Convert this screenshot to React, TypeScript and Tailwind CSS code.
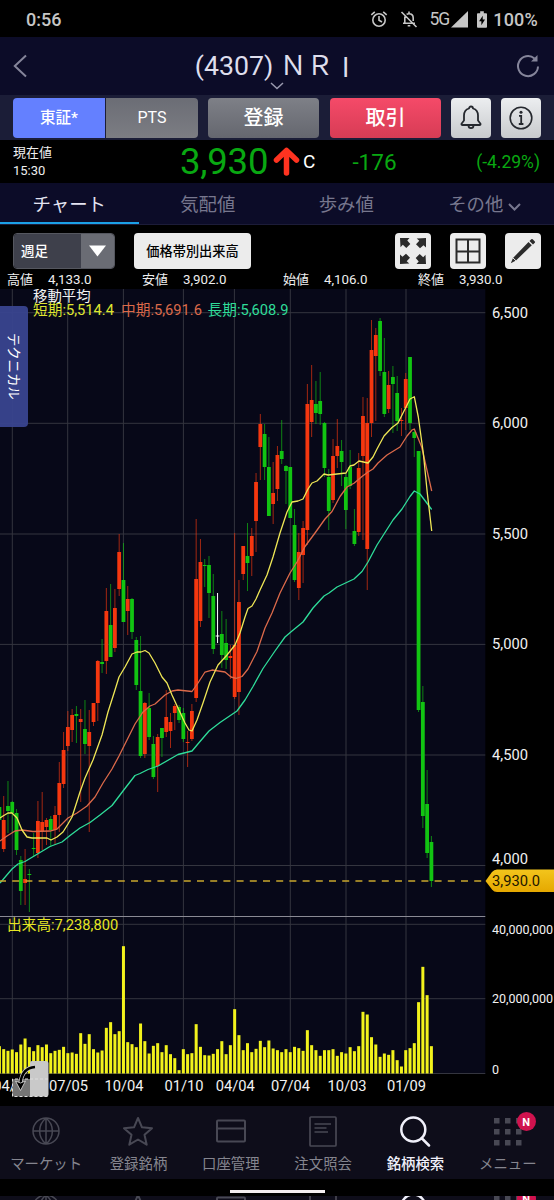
import type { ReactNode } from "react";

type Candle = [high: number, top: number, bottom: number, low: number, kind: "u" | "d" | "f"];

const STEP = 4.277;
const LAST_X = 431.4;
const BASE_Y = 1073.5;

// wick top, body top, body bottom, wick bottom
const candles: Candle[] = [
  [805, 807, 820, 822, "d"], [796, 820, 849, 852, "u"], [781, 806, 811, 833, "d"], [801, 802, 813, 833, "d"],
  [809, 813, 850, 855, "d"], [856, 860, 891, 905, "d"], [849, 879, 883, 905, "u"], [869, 874, 875, 912, "d"],
  [833, 848, 849, 857, "d"], [801, 821, 853, 858, "u"], [792, 822, 831, 850, "u"], [818, 820, 827, 845, "u"],
  [816, 819, 830, 847, "d"], [806, 815, 830, 845, "u"], [762, 783, 815, 832, "u"], [732, 750, 784, 788, "u"],
  [711, 727, 746, 751, "u"], [709, 715, 730, 742, "u"], [706, 714, 716, 743, "d"], [709, 719, 722, 802, "u"],
  [700, 729, 744, 754, "d"], [710, 732, 746, 832, "u"], [703, 703, 722, 726, "u"], [660, 661, 703, 721, "u"],
  [639, 662, 664, 673, "d"], [588, 611, 661, 674, "u"], [584, 625, 657, 657, "d"], [589, 608, 648, 652, "u"],
  [534, 552, 589, 596, "u"], [543, 580, 622, 622, "d"], [586, 599, 611, 635, "u"], [598, 599, 632, 639, "d"],
  [637, 640, 685, 690, "d"], [636, 691, 756, 758, "d"], [702, 703, 754, 758, "u"], [693, 708, 737, 740, "d"],
  [736, 744, 777, 779, "d"], [734, 737, 766, 792, "u"], [728, 728, 738, 757, "d"], [690, 717, 732, 737, "u"],
  [713, 722, 731, 748, "u"], [704, 706, 713, 730, "u"], [705, 707, 720, 723, "d"], [708, 713, 739, 742, "d"],
  [731, 742, 743, 767, "u"], [704, 711, 739, 741, "u"], [519, 579, 698, 702, "u"], [539, 562, 621, 627, "u"],
  [559, 565, 566, 587, "d"], [556, 565, 593, 618, "d"], [574, 596, 649, 654, "d"], [593, 635.5, 636.5, 643, "f"],
  [611, 634, 655, 668, "d"], [619, 643, 660, 669, "d"], [645, 656, 658, 679, "u"], [533, 645, 697, 699, "u"],
  [580, 602, 692, 715, "u"], [546, 546, 574, 580, "u"], [523, 556, 563, 591, "d"], [528, 536, 556, 576, "u"],
  [473, 482, 521, 552, "u"], [414, 424, 447, 480, "u"], [424, 434, 467, 480, "d"], [437, 467, 516, 516, "d"],
  [462, 493, 504, 524, "u"], [446, 455, 489, 501, "u"], [420, 451, 459, 464, "d"], [465, 466, 471, 504, "d"],
  [467, 467, 518, 518, "d"], [509, 525, 580, 582, "d"], [533, 552, 588, 600, "u"], [521, 528, 555, 583, "u"],
  [384, 404, 530, 545, "u"], [365, 400, 422, 437, "u"], [381, 404, 413, 424, "d"], [372, 401, 414, 425, "d"],
  [422, 423, 468, 477, "d"], [469, 477, 511, 530, "d"], [439, 456, 500, 503, "u"], [419, 446, 456, 468, "u"],
  [440, 451, 462, 486, "d"], [473, 477, 510, 529, "d"], [450, 467, 486, 489, "d"], [509, 531, 544, 546, "d"],
  [453, 468, 532, 536, "u"], [397, 416, 456, 540, "u"], [398, 423, 549, 590, "u"], [320, 350, 423, 437, "u"],
  [328, 335, 356, 421, "u"], [318, 321, 371, 376, "d"], [338, 372, 414, 417, "d"], [371, 385, 409, 413, "u"],
  [366, 377, 384, 433, "d"], [376, 393, 421, 431, "d"], [408, 420, 421, 436, "u"], [373, 379, 408, 430, "u"],
  [357, 357, 423, 430, "d"], [429, 432, 438, 457, "d"], [451, 451, 710, 712, "d"], [686, 702, 816, 828, "d"],
  [770, 804, 853, 858, "d"], [836, 842, 881, 887, "d"],
];

// bar heights in thirds of a pixel
const volumes = [
  82, 73, 68, 72, 64, 87, 105, 79, 67, 85, 79, 87, 61, 68, 71, 80, 61, 63, 59, 121, 89, 118, 73, 63, 69, 137, 154,
  118, 127, 382, 94, 88, 79, 150, 97, 60, 83, 91, 64, 85, 58, 46, 10, 73, 58, 61, 148, 80, 55, 54, 59, 73, 97, 58,
  85, 193, 115, 70, 91, 64, 74, 98, 79, 99, 75, 70, 64, 73, 64, 80, 76, 68, 130, 85, 70, 53, 70, 70, 73, 53, 64, 60,
  79, 67, 82, 185, 177, 109, 87, 50, 60, 56, 70, 40, 21, 70, 76, 91, 214, 320, 235, 82,
];

const shortMa =
  "0,818 3,816 8,813 12,813 17,818 22,830 27,837 32,838 38,838 47,838 51,840 57,837 63,832 68,824 72,817 80,792 85,778 93,760 102,735 108,712 115,690 119,677 125,667 132,654 137,652 141,652 145,650.5 149,653 155,663 162,677 167,683 172,695 178,708 185,723 189,730 192,731 197,720 203,703 210,682 218,665 227,655 235,645 240,633 245,617 248,608.5 252,606 256,599 260,590 267,575 273,557 280,533 287,512 292,502 298,501 303,499 308,489 312,483 317,481 324,474 328,475 346,473 350,466 354,465 359,461 368,463 373,457 377,449 384,436 392,427.5 398,423 405,409 410,399 414.3,396.7 418.3,417 423.3,453 427.3,493 431.7,531";
const midMa =
  "0,841 7,836 15,831 22,830 33,831.5 50,831 57,829 68,818 77,813 87,806 95,797 103,783 112,769 119,756 127,740 135,724 143,712 150,706 155,704 165,695 172,691 178,690 192,691.5 198,683 205,672 212,670 225,672 231,677 236,678.3 242,676.5 248,669 257,651.5 265,628 272,613 280,593 290,573 297,562 305,546.5 315,533 325,519 332,511.5 340,496.5 347,487 354,483.3 362,476.5 368,472 373,469 378,463 387,455 400,447 407,436 412,430 414.3,429 421.7,447 431.7,491";
const longMa =
  "0,883 12,869 18,864 25,861.5 50,846.5 62,842 70,835.5 80,828 90,822.5 100,815 112,805.5 123,791 135,775.5 140,773.5 148,769.5 158,766 178,754.5 192,751 200,741.5 209,731 220,722.5 237,711 245,700 253,686.5 263,668.5 275,651 285,637 292,631 303,622 313,608 324,596 329,593 337,587 354,579 362,571.5 368,562 377,545 393,520 402,509 410,496.5 414.3,491 420,494 431.7,509.5";

const candleColor = { u: "#f5370f", d: "#12c412", f: "#ffffff" };

const priceLabels: [string, number][] = [
  ["6,500", 312.5], ["6,000", 423], ["5,500", 533.5], ["5,000", 644], ["4,500", 754.5], ["4,000", 858.5],
];
const dateLabels: [string, number][] = [
  ["04/", 4.5], ["07/05", 68.5], ["10/04", 124], ["01/10", 184], ["04/04", 235.3], ["07/04", 290.5], ["10/03", 347], ["01/09", 406.5],
];
const verticals = [12.3, 67.7, 123.4, 183.4, 234.4, 290.3, 346, 406];
const horizontals = [312.7, 423.3, 534, 644.4, 755, 865.5, 924.3, 998.7, 1073.5];

function Chart() {
  return (
    <svg width="554" height="817" viewBox="0 289 554 817" className="block">
      <defs>
        <linearGradient id="tag" x1="0" y1="0" x2="0" y2="1">
          <stop offset="0" stopColor="#f3c51c" />
          <stop offset="1" stopColor="#e5a800" />
        </linearGradient>
      </defs>
      <rect x="0" y="289" width="485.3" height="784.5" fill="#070818" />
      <g stroke="#34353f" strokeWidth="1">
        {verticals.map((x) => <line key={x} x1={x} x2={x} y1="289" y2="1073.5" />)}
        {horizontals.map((y) => <line key={y} x1="0" x2="485.3" y1={y} y2={y} />)}
      </g>
      <line x1="0" x2="485.3" y1="916.5" y2="916.5" stroke="#8a8a94" />

      {/* Candles */}
      {candles.map(([high, top, bottom, low, kind], i) => {
        const x = LAST_X - (candles.length - 1 - i) * STEP;
        const color = candleColor[kind];
        return (
          <g key={i} fill={color}>
            <rect x={x - 0.5} y={high} width="1" height={low - high} opacity={kind === "f" ? 1 : 0.65} />
            <rect x={x - 1.9} y={top} width="3.8" height={Math.max(1, bottom - top)} />
          </g>
        );
      })}

      {/* Volume */}
      {volumes.map((v, i) => (
        <rect key={i} x={LAST_X - (volumes.length - 1 - i) * STEP - 1.5} y={BASE_Y - v / 3} width="3" height={v / 3} fill="#f2f21c" />
      ))}

      {/* Moving averages */}
      <g fill="none" strokeWidth="1.3" strokeLinejoin="round">
        <polyline points={longMa} stroke="#2fdd9a" />
        <polyline points={midMa} stroke="#dc6a4a" />
        <polyline points={shortMa} stroke="#efe756" />
      </g>

      {/* Last price */}
      <line x1="0" x2="485" y1="881" y2="881" stroke="#c9a62c" strokeWidth="1.3" strokeDasharray="7 6.2" strokeDashoffset="1" />
      <path d="M485.5 881 492 872Q494 869.500 497 869.500H554V892H497Q494 892 492 889.500Z" fill="url(#tag)" />

      <g fontFamily="Roboto, 'Noto Sans CJK JP', sans-serif" fill="#f2f2f2">
        <g fontSize="14.7">
          {priceLabels.map(([t, y]) => <text key={t} x="492" y={y + 5}>{t}</text>)}
          {dateLabels.map(([t, x]) => <text key={t} x={x} y="1091" textAnchor="middle">{t}</text>)}
          <text x="492" y="886" fill="#1c1600">3,930.0</text>
        </g>
        <g fontSize="12.500">
          <text x="492" y="934">40,000,000</text>
          <text x="492" y="1003">20,000,000</text>
          <text x="492" y="1074">0</text>
        </g>
        <g fontSize="14.700">
          <text x="33" y="301" fontSize="14.400">移動平均</text>
          <text x="33" y="314.5" fill="#dfe630">短期:5,514.4</text>
          <text x="121" y="314.5" fill="#dc6a4a">中期:5,691.6</text>
          <text x="207.500" y="314.5" fill="#2fdd9a">長期:5,608.9</text>
          <text x="7" y="929.5" fill="#e6e624">出来高:7,238,800</text>
        </g>
      </g>

      {/* Screen rotation toggle */}
      <path d="M32 1061H46Q48.500 1061 48.500 1063.500V1094Q48.500 1096.500 46 1096.500H30V1063Q30 1061 32 1061Z" fill="#c9c9c9" />
      <path d="M14 1079H30V1096.500H14Q12 1096.500 12 1094V1081Q12 1079 14 1079Z" fill="#747474" />
      <path d="M48 1079H12.500V1096.500H48" fill="none" stroke="#ddd" strokeWidth="1" strokeDasharray="3 2" />
      <path d="M35 1067Q22 1068 20.500 1083" fill="none" stroke="#ccc" strokeWidth="4" />
      <path d="M35 1067Q22 1068 20.500 1083" fill="none" stroke="#000" strokeWidth="2.500" />
      <path d="M15.500 1081 20.500 1090.500 25.500 1081 20.500 1083Z" fill="#000" stroke="#ddd" strokeWidth=".8" />
    </svg>
  );
}

function StatusBar() {
  return (
    <div className="flex h-[37px] items-center bg-black pt-px pr-[16px] pl-[26px] text-[18px] font-medium text-[#c6c6c6]">
      <span className="grow">0:56</span>
      <svg width="18" height="18" viewBox="0 0 18 18" fill="none" stroke="currentColor" strokeWidth="1.600" className="mr-[12px]">
        <circle cx="9" cy="10" r="6.200" />
        <path d="M9 6v4.300l3 1.700M1.300 4.800 4.800 1.800M16.700 4.800 13.200 1.800" />
      </svg>
      <svg width="18" height="18" viewBox="0 0 18 18" fill="none" stroke="currentColor" strokeWidth="1.600" className="mr-[11px]">
        <path d="M4.800 6.500V13M3 13.300h12M13.200 11V8c0-2.500-1.700-4.300-4.200-4.300-1 0-1.800.3-2.400.7M9 1.500v2M7.700 15.700h2.600M1.500 2 16.500 17" />
      </svg>
      <span className="text-[17.500px] font-normal tracking-[-1px]">5G</span>
      <svg width="17" height="17" viewBox="0 0 17 17" className="mr-[9px] ml-[2px]"><path d="M17 0V16.500H0Z" fill="currentColor" /></svg>
      <svg width="10" height="17" viewBox="0 0 11 18" className="mr-[6px]">
        <path d="M3.500 0h4v2H10q1 0 1 1v14q0 1-1 1H1q-1 0-1-1V3Q0 2 1 2h2.500Z" fill="currentColor" />
        <path d="M6.300 4.800 2.300 11h2.500v4.200L8.800 9H6.300Z" fill="#000" />
      </svg>
      <span className="tracking-[0.200px]">100%</span>
    </div>
  );
}

function Header() {
  return (
    <div className="relative flex h-[58px] items-center justify-between bg-[#0c0c28] px-[13px]">
      <svg width="14" height="24" viewBox="0 0 14 24" fill="none" stroke="#85859a" strokeWidth="2"><path d="M13 1.500 1.800 12 13 22.500" /></svg>
      <h1 className="flex pl-[12px] text-[26.700px] whitespace-pre text-[#dedeec]">
        <span>(4307) </span>
        <span>ＮＲ</span>
        <span className="w-[27px] pr-[2px] text-center font-['Noto_Sans_CJK_JP',sans-serif]">I</span>
      </h1>
      <svg width="24" height="24" viewBox="0 0 24 24" fill="none" stroke="#85859a" strokeWidth="2" className="mr-[1px]">
        <path d="M22 12.500A10 10 0 1 1 18.500 4.500" />
        <path d="M21.500 1v6.500H15Z" fill="#85859a" stroke="none" />
      </svg>
      <svg width="14" height="8" viewBox="0 0 14 8" fill="none" stroke="#9a9aae" strokeWidth="1.500" className="absolute bottom-[5px] left-[270px]">
        <path d="M1 1 7 6.500 13 1" />
      </svg>
    </div>
  );
}

function OrderRow() {
  return (
    <div className="flex h-[45px] items-center bg-[#1b1d37] px-[13px] text-white">
      <div className="flex h-[40px] w-[185px] gap-px overflow-hidden rounded text-[16px]">
        <button className="w-[92px] bg-[#6480ff] pt-[3px] text-[15.500px] font-medium">東証*</button>
        <button className="grow bg-linear-to-b from-[#6b6d75] to-[#7c7d83]">PTS</button>
      </div>
      <button className="ml-[10px] h-[40px] w-[111px] rounded bg-linear-to-b from-[#7e8087] to-[#65676f] pt-px text-[20px] font-medium">登録</button>
      <button className="ml-[11px] h-[40px] w-[111px] rounded bg-linear-to-b from-[#f54a69] to-[#d73c55] pt-px text-[20px] font-medium">取引</button>
      <button className="ml-[10px] flex h-[40px] w-[40px] items-center justify-center rounded bg-linear-to-b from-[#eceef0] to-[#c8cacd]">
        <svg width="24" height="26" viewBox="0 0 24 26" fill="none" stroke="#25282e" strokeWidth="1.800" strokeLinejoin="round">
          <path d="M10 3.500a2 2 0 0 1 4 0c3.200.9 5 3.600 5 7v5l2.500 3.200q.3 1.300-1 1.300h-17q-1.300 0-1-1.300L5 15.500v-5c0-3.400 1.800-6.100 5-7Z" />
          <path d="M9.500 20.500c0 3.500 5 3.500 5 0" />
        </svg>
      </button>
      <button className="ml-[10px] flex h-[40px] w-[40px] items-center justify-center rounded bg-linear-to-b from-[#eceef0] to-[#c8cacd]">
        <svg width="24" height="24" viewBox="0 0 24 24" fill="none" stroke="#25282e" strokeWidth="1.600">
          <circle cx="12" cy="12" r="10.800" />
          <path d="M10 9.800h2.200v8M9.800 18h4.600" strokeWidth="1.800" />
          <circle cx="12" cy="6.300" r="1.500" fill="#25282e" stroke="none" />
        </svg>
      </button>
    </div>
  );
}

function PriceRow() {
  return (
    <div className="flex h-[43px] items-center bg-black pr-[14px] pl-[13px] text-[#09a812]">
      <div className="w-[167px] text-[13px] leading-[18px] text-[#eee]">
        <p>現在値</p>
        <p>15:30</p>
      </div>
      <span className="w-[93px] pt-[2px] text-[36.500px] leading-none tracking-[-0.200px]">3,930</span>
      <svg width="27" height="29" viewBox="0 0 27 29" fill="none" stroke="#ff3320" strokeWidth="5.500" strokeLinecap="round" strokeLinejoin="round">
        <path d="M13.500 26V4M3.500 13 13.500 3.500 23.500 13" />
      </svg>
      <span className="ml-[3px] pt-[2px] text-[19px] text-white">C</span>
      <span className="ml-[37px] grow pt-[2px] text-[22.500px]">-176</span>
      <span className="pt-[2px] text-[17.500px]">(-4.29%)</span>
    </div>
  );
}

function Tabs() {
  return (
    <div className="flex h-[42px] border-b border-[#1c1c38] bg-[#0c0c28] text-[18.400px] text-[#77778e]">
      <div className="flex w-1/4 items-center justify-center border-b-2 border-[#1ba0e6] pt-[5px] text-[#e4e4f2]">チャート</div>
      <div className="flex w-1/4 items-center justify-center pt-[3px]">気配値</div>
      <div className="flex w-1/4 items-center justify-center pt-[3px]">歩み値</div>
      <div className="flex w-1/4 items-center justify-center gap-[5px] pt-[3px]">
        その他
        <svg width="13" height="8" viewBox="0 0 13 8" fill="none" stroke="currentColor" strokeWidth="2" className="mt-[3px]"><path d="M1 1 6.500 6.500 12 1" /></svg>
      </div>
    </div>
  );
}

function ToolButton({ children }: { children: ReactNode }) {
  return <button className="flex h-[36px] w-[36px] items-center justify-center rounded bg-[#ececec]">{children}</button>;
}

function Toolbar() {
  return (
    <div className="flex h-[46px] items-end bg-black px-[13px] pb-[2px]">
      <div className="flex h-[36px] w-[102px] overflow-hidden rounded border border-[#55575f]">
        <span className="flex w-[67px] items-center bg-[#3e404b] pl-[7px] text-[13.500px] font-medium text-white">週足</span>
        <span className="flex grow items-center justify-center bg-[#6a6c74]">
          <svg width="17" height="12" viewBox="0 0 17 12"><path d="M0 .5H17L8.500 11.500Z" fill="#fff" /></svg>
        </span>
      </div>
      <button className="ml-[19px] h-[36px] w-[117px] rounded bg-[#ececec] pt-[2px] text-[13.200px] font-medium whitespace-nowrap text-black">価格帯別出来高</button>
      <div className="flex grow justify-end gap-[19px]">
        <ToolButton>
          <svg width="28" height="28" viewBox="0 0 28 28" fill="#2b2b2b">
            {["rotate(0 14 14)", "rotate(90 14 14)", "rotate(180 14 14)", "rotate(270 14 14)"].map((t) => (
              <path key={t} transform={t} d="M1 1h9.500L8.300 3.500 11.300 7 7.300 11 3.800 7.700 1.500 10.300Z" />
            ))}
          </svg>
        </ToolButton>
        <ToolButton>
          <svg width="26" height="26" viewBox="0 0 26 26" fill="none" stroke="#2b2b2b" strokeWidth="2"><path d="M1.500 1.500h23v23h-23ZM13 1.500v23M1.500 13.500h23" /></svg>
        </ToolButton>
        <ToolButton>
          <svg width="26" height="26" viewBox="0 0 26 26" fill="#2b2b2b">
            <path d="M18.500 4 21.800 7.300 6 22.500.8 25.300 3 20ZM19.500 3 21.300 1.200Q22 .6 22.700 1.300L24.800 3.400Q25.400 4 24.800 4.700L23 6.500Z" />
            <path d="M3 20 6 22.800" stroke="#ececec" strokeWidth="1" />
          </svg>
        </ToolButton>
      </div>
    </div>
  );
}

const quotes = [
  ["高値", "4,133.0"],
  ["安値", "3,902.0"],
  ["始値", "4,106.0"],
  ["終値", "3,930.0"],
];

function QuoteRow() {
  return (
    <div className="flex h-[18px] items-center bg-black pl-[7px] text-[13px] text-[#eee]">
      {quotes.map(([label, value], i) => (
        <div key={label} className={i === 1 ? "flex w-[141px] gap-[15px]" : "flex w-[135px] gap-[15px]"}>
          <span>{label}</span>
          <span className="text-[13.300px]">{value}</span>
        </div>
      ))}
    </div>
  );
}

const navItems: { label: string; icon: ReactNode }[] = [
  {
    label: "マーケット",
    icon: <path d="M16 3a13 13 0 1 0 0 26 13 13 0 1 0 0-26ZM3 16h26M16 3v26M16 3c-8.500 7-8.500 19 0 26M16 3c8.500 7 8.500 19 0 26" strokeWidth="1.500" />,
  },
  { label: "登録銘柄", icon: <path d="M16 3l4 9.300 10 .9-7.500 6.600 2.200 9.900L16 24.500l-8.700 5.200 2.200-9.900L2 13.200l10-.9Z" /> },
  { label: "口座管理", icon: <path d="M3 5.500h26q1 0 1 1v19q0 1-1 1H3q-1 0-1-1v-19q0-1 1-1ZM2 13.500h28" /> },
  {
    label: "注文照会",
    icon: <path d="M4 2h24q1 0 1 1v27q0 1-1 1H4q-1 0-1-1V3q0-1 1-1ZM7.500 9H24M7.500 13h12M7.500 17H21" strokeWidth="1.700" />,
  },
  { label: "銘柄検索", icon: <path d="M14.300 2.500a12 12 0 1 0 0 24 12 12 0 1 0 0-24ZM22.500 23 30 30.500" strokeWidth="2.500" strokeLinecap="round" /> },
  {
    label: "メニュー",
    icon: <path d="M2 3h5.500v5.500H2ZM13 3h5.500v5.500H13ZM24 3h5.500v5.500H24ZM2 14h5.500v5.500H2ZM13 14h5.500v5.500H13ZM24 14h5.500v5.500H24ZM2 25h5.500v5.500H2ZM13 25h5.500v5.500H13ZM24 25h5.500v5.500H24Z" fill="currentColor" stroke="none" />,
  },
];

function BottomNav() {
  return (
    <nav className="flex h-[73px] bg-[#0e0d1a] text-[#85858f]">
      {navItems.map(({ label, icon }, i) => (
        <div key={label} className={`relative flex w-1/6 flex-col items-center pt-[9px] ${i === 4 ? "text-[#f0f0fa]" : ""}`}>
          <svg width="32" height="32" viewBox="0 0 32 32" fill="none" stroke="currentColor" strokeWidth="2" strokeLinejoin="round" className={i === 4 ? "" : "text-[#484854]"}>
            {icon}
          </svg>
          <span className={`mt-[9px] text-[14.400px] leading-[18px] whitespace-nowrap ${i === 4 ? "font-medium" : ""}`}>{label}</span>
          {i === 5 && (
            <span className="absolute top-[6px] left-[55px] flex h-[19px] w-[19px] items-center justify-center rounded-full bg-[#d0124e] pt-[2px] text-[11px] leading-none font-bold text-white">N</span>
          )}
        </div>
      ))}
    </nav>
  );
}

export default function App() {
  return (
    <div className="h-[1200px] w-[554px] overflow-hidden bg-black font-[Roboto,'Noto_Sans_CJK_JP',sans-serif]">
      <StatusBar />
      <Header />
      <OrderRow />
      <PriceRow />
      <Tabs />
      <Toolbar />
      <QuoteRow />
      <div className="relative">
        <Chart />
        <div className="absolute top-[17px] left-0 flex h-[121px] w-[28px] items-center justify-center rounded-r bg-[#39458f]/95 text-[13.500px] tracking-[-0.200px] text-white [text-orientation:sideways] [writing-mode:vertical-rl]">
          テクニカル
        </div>
      </div>
      <BottomNav />
      <div className="flex h-[17px] items-center justify-center pt-[8px]">
        <div className="h-[3px] w-[95px] bg-[#f3eef0]" />
      </div>
      <div className="h-[4px] overflow-hidden">
        <div className="-mt-[13px]"><BottomNav /></div>
      </div>
    </div>
  );
}
